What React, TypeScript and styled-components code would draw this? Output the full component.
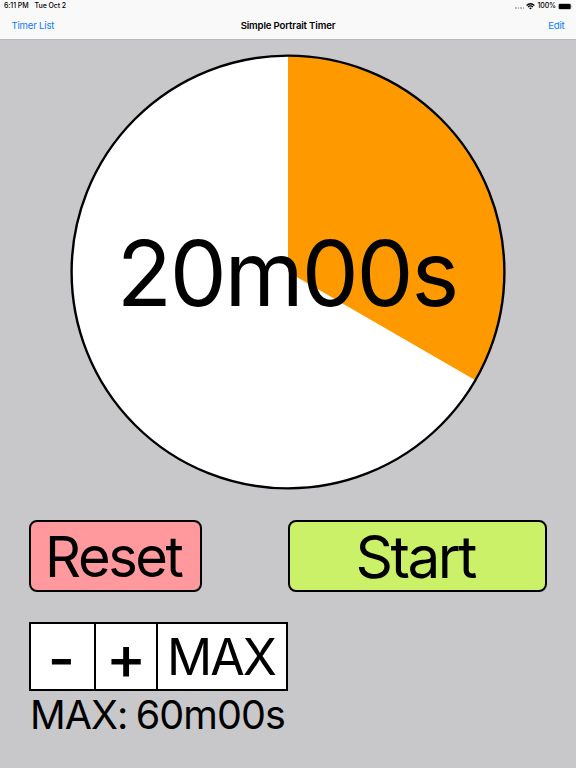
import React from 'react';
import { createGlobalStyle, styled } from 'styled-components';

const RADIUS = 216.4;

const formatTime = (seconds: number) =>
  `${Math.floor(seconds / 60)}m${String(seconds % 60).padStart(2, '0')}s`;

type DialProps = {
  seconds: number;
  total: number;
};

const Dial = ({ seconds, total }: DialProps) => {
  const angle = (seconds / total) * Math.PI * 2;
  const x = RADIUS * Math.sin(angle);
  const y = -RADIUS * Math.cos(angle);
  const large = angle > Math.PI ? 1 : 0;

  return (
    <DialBox>
      <svg width="436" height="436" viewBox="-218 -218 436 436">
        <circle r={RADIUS} fill="#fff" />
        <path
          d={`M0 0V${-RADIUS}A${RADIUS} ${RADIUS} 0 ${large} 1 ${x} ${y}Z`}
          fill="#ff9900"
        />
        <circle r={RADIUS} fill="none" stroke="#000" strokeWidth="2.4" />
      </svg>
      <DialTime>
        <Label $size={90.5} $spacing={-2.2} $drop={0.5}>
          {formatTime(seconds)}
        </Label>
      </DialTime>
    </DialBox>
  );
};

const WifiIcon = () => (
  <svg width="9" height="7" viewBox="0 0 9 7" fill="none" stroke="#000">
    <path d="M0.6 2.5Q4.5 -1 8.4 2.5" strokeWidth="1.2" />
    <path d="M2 4Q4.5 1.8 7 4" strokeWidth="1.1" />
    <path d="M3.1 5.1Q4.5 4 5.9 5.1L4.5 6.6Z" fill="#000" stroke="none" />
  </svg>
);

const BatteryIcon = () => (
  <svg width="15" height="7" viewBox="0 0 15 7">
    <rect x="0.3" y="0.4" width="12.8" height="6" rx="1.5" fill="#999" />
    <rect x="0.9" y="0.9" width="11.6" height="5" rx="0.9" fill="#000" />
    <path d="M13.7 2.4Q14.7 3.4 13.7 4.4Z" fill="#777" />
  </svg>
);

export default function App() {
  return (
    <Screen>
      <GlobalStyle />
      <Header>
        <StatusBar>
          <span>6:11 PM</span>
          <span>Tue Oct 2</span>
          <StatusRight>
            <Dots>
              <i />
              <i />
              <i />
              <i />
            </Dots>
            <WifiIcon />
            <span>100%</span>
            <BatteryIcon />
          </StatusRight>
        </StatusBar>
        <NavBar>
          <NavLink>Timer List</NavLink>
          <Title>Simple Portrait Timer</Title>
          <NavLink $end>Edit</NavLink>
        </NavBar>
      </Header>
      <Dial seconds={20 * 60} total={60 * 60} />
      <Actions>
        <ActionButton $color="#ff999d">
          <Label $size={56} $spacing={-2.4} $drop={1} $shift={-1}>Reset</Label>
        </ActionButton>
        <ActionButton $color="#caf167">
          <Label $size={58.5} $spacing={-2.5} $drop={1} $shift={-1}>Start</Label>
        </ActionButton>
      </Actions>
      <Stepper>
        <Step>
          <Label $size={59} $weight={450} $drop={2} $shift={-1}>-</Label>
        </Step>
        <Step>
          <Label $size={61} $weight={450} $drop={1}>+</Label>
        </Step>
        <Step>
          <Label $size={50} $spacing={-2} $drop={-0.5}>MAX</Label>
        </Step>
      </Stepper>
      <MaxTime>
        <Label $size={39.5} $spacing={-0.95}>MAX: {formatTime(60 * 60)}</Label>
      </MaxTime>
    </Screen>
  );
}

const GlobalStyle = createGlobalStyle`
  * {
    box-sizing: border-box;
  }

  body {
    margin: 0;
  }

  svg {
    display: block;
  }

  button {
    margin: 0;
    padding: 0;
    font: inherit;
    color: inherit;
    background: none;
    border: 0;
  }
`;

const Screen = styled.div`
  width: 576px;
  height: 768px;
  overflow: hidden;
  background: #c8c8ca;
  color: #000;
  font-family: Inter, 'Liberation Sans', sans-serif;
`;

const Header = styled.header`
  height: 40px;
  background: #f9f9f9;
  border-bottom: 1px solid #b9b9bb;
`;

const StatusBar = styled.div`
  display: flex;
  align-items: center;
  gap: 6px;
  height: 12px;
  padding: 0 3px 0 4px;
  font-size: 7px;
  line-height: 12px;
  font-weight: 500;
  letter-spacing: -0.08px;
  white-space: nowrap;
`;

const StatusRight = styled.div`
  display: flex;
  align-items: center;
  gap: 2px;
  margin-left: auto;
`;

const Dots = styled.div`
  display: flex;
  gap: 1px;
  padding-top: 4px;

  i {
    width: 1.6px;
    height: 1.6px;
    border-radius: 50%;
    background: #aaa;
  }
`;

const NavBar = styled.nav`
  display: grid;
  grid-template-columns: 1fr auto 1fr;
  align-items: center;
  height: 27px;
  padding: 0 11.5px;
  font-size: 9.6px;
`;

const NavLink = styled.button<{ $end?: boolean }>`
  justify-self: ${({ $end }) => ($end ? 'end' : 'start')};
  color: #0a7cff;
  letter-spacing: -0.2px;
`;

const Title = styled.h1`
  margin: 0;
  font-size: 9.6px;
  font-weight: 600;
  letter-spacing: -0.15px;
`;

// The right margin cancels the spacing after the last letter, so that
// centred labels stay centred.
const Label = styled.span<{
  $size: number;
  $spacing?: number;
  $weight?: number;
  $drop?: number;
  $shift?: number;
}>`
  margin-right: ${({ $spacing = 0 }) => -$spacing}px;
  font-size: ${({ $size }) => $size}px;
  letter-spacing: ${({ $spacing = 0 }) => $spacing}px;
  font-weight: ${({ $weight = 400 }) => $weight};
  line-height: 1;
  white-space: nowrap;
  transform: translate(
    ${({ $shift = 0 }) => $shift}px,
    ${({ $drop = 0 }) => $drop}px
  );
`;

const DialBox = styled.div`
  position: relative;
  width: 436px;
  height: 436px;
  margin: 14px auto 0;
`;

const DialTime = styled.div`
  position: absolute;
  inset: 0;
  display: flex;
  align-items: center;
  justify-content: center;
`;

const Actions = styled.div`
  display: grid;
  grid-template-columns: 173px 259px;
  justify-content: space-between;
  height: 72px;
  margin: 30px 29px 0;
`;

const ActionButton = styled.button<{ $color: string }>`
  display: flex;
  align-items: center;
  justify-content: center;
  border: 2px solid #000;
  border-radius: 8px;
  background: ${({ $color }) => $color};
`;

const Stepper = styled.div`
  display: grid;
  grid-template-columns: 63px 60px 1fr;
  gap: 2px;
  width: 259px;
  height: 69px;
  margin: 30px 0 0 29px;
  border: 2px solid #000;
  background: #000;
`;

const Step = styled.button`
  display: flex;
  align-items: center;
  justify-content: center;
  background: #fff;
`;

const MaxTime = styled.div`
  display: flex;
  margin: 5px 0 0 30px;
  word-spacing: -1.8px;
`;
